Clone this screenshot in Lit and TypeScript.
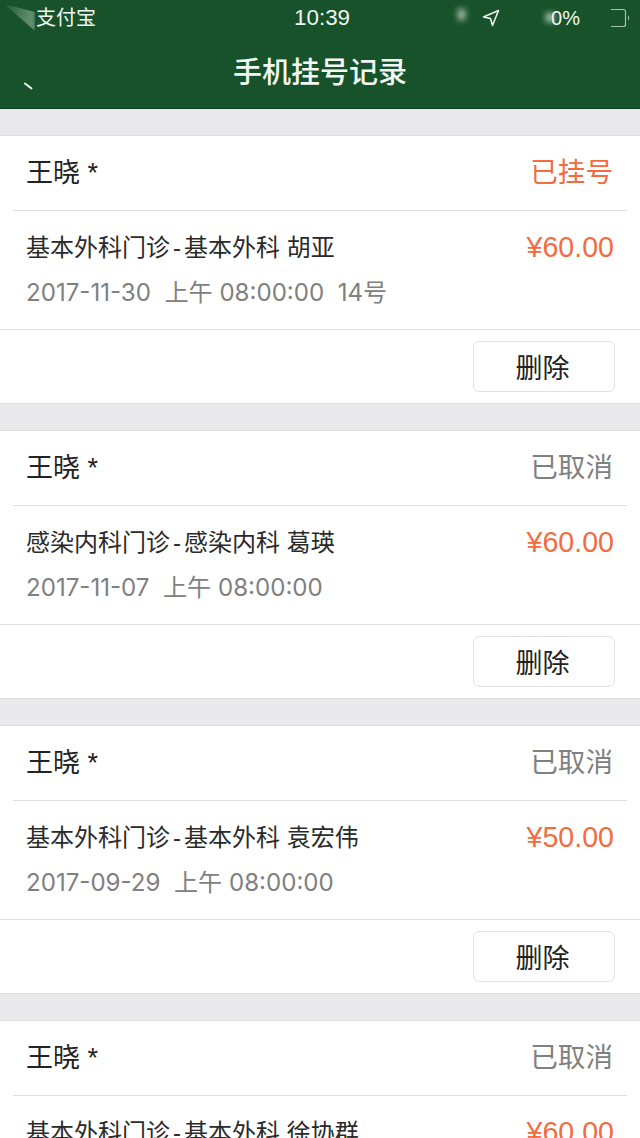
import {html, LitElement, css} from 'lit';
import {customElement} from 'lit/decorators.js';

interface Record {
  name: string;
  status: string;
  active: boolean;
  dept: string;
  doctor: string;
  price: string;
  date: string;
}

const RECORDS: Record[] = [
  {name: '王晓 *', status: '已挂号', active: true, dept: '基本外科门诊', doctor: '基本外科 胡亚', price: '¥60.00', date: '2017-11-30  上午 08:00:00  14号'},
  {name: '王晓 *', status: '已取消', active: false, dept: '感染内科门诊', doctor: '感染内科 葛瑛', price: '¥60.00', date: '2017-11-07  上午 08:00:00'},
  {name: '王晓 *', status: '已取消', active: false, dept: '基本外科门诊', doctor: '基本外科 袁宏伟', price: '¥50.00', date: '2017-09-29  上午 08:00:00'},
  {name: '王晓 *', status: '已取消', active: false, dept: '基本外科门诊', doctor: '基本外科 徐协群', price: '¥60.00', date: ''},
];

@customElement('app-root')
export class AppRoot extends LitElement {
  static styles = css`
    :host {
      display: block;
      position: relative;
      height: 1138px;
      overflow: hidden;
      background: #e9e9eb;
      font-family: 'Liberation Sans', 'Noto Sans CJK SC', sans-serif;
    }

    .header {
      position: relative;
      height: 109px;
      box-sizing: border-box;
      background: #17522a;
      border-bottom: 1px solid #103f20;
      color: #f2f7f2;
    }

    .status-bar {
      display: grid;
      grid-template-columns: 258px auto 1fr;
      align-items: center;
      height: 36px;
      padding: 0 9px 0 36px;
      font-size: 20px;
    }

    .carrier {
      line-height: 36px;
    }

    .clock {
      font-size: 22.4px;
      line-height: 36px;
    }

    .status-right {
      display: flex;
      align-items: center;
      justify-content: flex-end;
      font-size: 20px;
    }

    .arrow {
      margin-right: 51px;
    }

    .percent {
      margin-right: 29px;
    }

    .battery {
      display: block;
    }

    .title {
      margin-top: 9px;
      text-align: center;
      font-size: 29px;
      font-weight: 500;
      line-height: 56px;
      color: #f4f8f4;
    }

    /* blurred leftovers in the screenshot */
    .smudge {
      position: absolute;
      background: #e8f0e8;
      filter: blur(3px);
    }

    .smudge-corner {
      left: 4px;
      top: 4px;
      width: 31px;
      height: 27px;
      background: linear-gradient(100deg, rgba(232, 240, 232, 0.05), rgba(232, 240, 232, 0.45));
      clip-path: polygon(0 0, 100% 30%, 100% 100%);
      filter: blur(2px);
    }

    .smudge-dot {
      left: 458px;
      top: 9px;
      width: 7px;
      height: 11px;
      opacity: 0.75;
    }

    .smudge-percent {
      left: 546px;
      top: 13px;
      width: 8px;
      height: 9px;
      opacity: 0.8;
    }

    .back {
      position: absolute;
      left: 23px;
      top: 82px;
    }

    .list {
      display: flex;
      flex-direction: column;
      gap: 26px;
      padding-top: 26px;
    }

    .card {
      background: #fff;
      border-top: 1px solid #dedede;
      border-bottom: 1px solid #dedede;
    }

    .card-head {
      display: flex;
      align-items: center;
      justify-content: space-between;
      box-sizing: border-box;
      height: 75px;
      margin: 0 13px;
      padding: 0 14px 6px 13px;
      border-bottom: 1px solid #e0e0e0;
    }

    .name {
      font-size: 27px;
      color: #222;
    }

    .status {
      font-size: 27.6px;
      color: #808080;
    }

    .status.active {
      color: #f26c40;
    }

    .card-body {
      display: flex;
      justify-content: space-between;
      box-sizing: border-box;
      height: 119px;
      padding: 19px 26px 0;
      border-bottom: 1px solid #e0e0e0;
    }

    .info {
      display: flex;
      flex-direction: column;
      gap: 9px;
    }

    .desc {
      font-size: 24px;
      line-height: 36px;
      color: #2a2a2a;
    }

    .dash {
      padding: 0 3px;
    }

    .date {
      font-family: Inter, 'Noto Sans CJK SC', sans-serif;
      font-size: 24.1px;
      line-height: 36px;
      color: #808080;
      white-space: pre;
    }

    .price {
      font-size: 28.6px;
      line-height: 34px;
      color: #f26c40;
    }

    .card-foot {
      display: flex;
      justify-content: flex-end;
      box-sizing: border-box;
      height: 73px;
      padding: 11px 25px 0 0;
    }

    .delete {
      box-sizing: border-box;
      width: 142px;
      height: 51px;
      padding: 0 3px 0 0;
      background: #fff;
      border: 1px solid #e2e2e2;
      border-radius: 6px;
      font-family: inherit;
      font-size: 27px;
      color: #222;
    }
  `;

  renderCard(r: Record) {
    return html`
      <section class="card">
        <div class="card-head">
          <span class="name">${r.name}</span>
          <span class="status ${r.active ? 'active' : ''}">${r.status}</span>
        </div>
        <div class="card-body">
          <div class="info">
            <div class="desc">${r.dept}<span class="dash">-</span>${r.doctor}</div>
            <div class="date">${r.date}</div>
          </div>
          <div class="price">${r.price}</div>
        </div>
        <div class="card-foot">
          <button class="delete">删除</button>
        </div>
      </section>
    `;
  }

  render() {
    return html`
      <header class="header">
        <div class="status-bar">
          <span class="carrier">支付宝</span>
          <span class="clock">10:39</span>
          <div class="status-right">
            <svg class="arrow" width="18" height="18" viewBox="0 0 18 18" fill="none" stroke="#f2f7f2" stroke-width="1.5" stroke-linejoin="round">
              <path d="M16.500 1.500 1.500 8 8.500 9.500 10.500 16.500Z"></path>
            </svg>
            <span class="percent">0%</span>
            <svg class="battery" width="22" height="20" viewBox="0 0 22 20" fill="none">
              <path d="M2 1.500H14.500a2 2 0 0 1 2 2V16.500a2 2 0 0 1-2 2H2" stroke="#a9c4ae" stroke-width="1.200"></path>
              <path d="M19 7.500c1.500.5 1.500 4.500 0 5Z" fill="#a9c4ae"></path>
            </svg>
          </div>
        </div>
        <div class="title">手机挂号记录</div>
        <div class="smudge smudge-corner"></div>
        <div class="smudge smudge-dot"></div>
        <div class="smudge smudge-percent"></div>
        <svg class="back" width="12" height="9" viewBox="0 0 12 9">
          <path d="M2 1.500 8.500 6.500" stroke="#f4f8f4" stroke-width="2" stroke-linecap="round"></path>
        </svg>
      </header>
      <main class="list">${RECORDS.map((r) => this.renderCard(r))}</main>
    `;
  }
}
